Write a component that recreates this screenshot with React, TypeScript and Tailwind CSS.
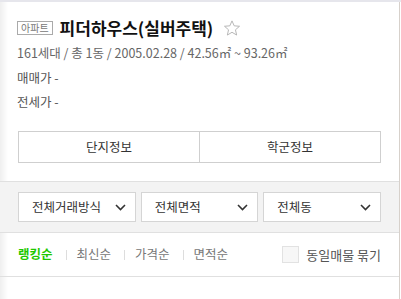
const sorts = ["랭킹순", "최신순", "가격순", "면적순"];
const filters = ["전체거래방식", "전체면적", "전체동"];

function Chevron() {
  return (
    <svg width="11" height="7" viewBox="0 0 11 7" className="shrink-0">
      <path d="M1 1l4.5 4.5L10 1" fill="none" stroke="#333" strokeWidth="1.6" />
    </svg>
  );
}

function Star() {
  return (
    <svg width="18" height="18" viewBox="0 0 24 24">
      <path
        d="M12 2.5l2.9 6.6 7.1.6-5.4 4.7 1.6 7-6.2-3.7-6.2 3.7 1.6-7L2 9.7l7.1-.6z"
        fill="none"
        stroke="#b5b5b5"
        strokeWidth="1.3"
        strokeLinejoin="round"
      />
    </svg>
  );
}

export default function App() {
  return (
    <div className="w-[401px] h-[299px] overflow-hidden bg-white font-['Noto_Sans_CJK_KR',sans-serif]">
      <div className="h-[2px] bg-[#e6e6ec]" />
      <div className="flex h-[297px]">
        <div className="w-[400px] border-r border-[#d7d1cb] bg-[linear-gradient(to_right,#efefef,#ffffff_8px)]">
          {/* header */}
          <div className="pl-[17px] pr-[17px] pt-[14px]">
            <div className="flex h-[24px] items-center">
              <span className="flex h-[14px] items-center border border-[#aaa] px-[3px] text-[10px] leading-none text-[#777]">
                아파트
              </span>
              <h1 className="ml-[7px] text-[17px] font-bold leading-[24px] text-[#111]">
                피더하우스(실버주택)
              </h1>
              <span className="ml-[10px] flex">
                <Star />
              </span>
            </div>
            <p className="mt-[4px] h-[18px] text-[12.5px] leading-[18px] text-[#666]">
              161세대 / 총 1동 / 2005.02.28 / 42.56㎡ ~ 93.26㎡
            </p>
            <p className="mt-[4px] h-[24px] text-[12.5px] leading-[24px] text-[#555]">매매가 -</p>
            <p className="h-[24px] text-[12.5px] leading-[24px] text-[#555]">전세가 -</p>
          </div>

          <div className="mx-[18px] mt-[17px] flex h-[32px] border border-[#cfcfcf] text-[12.5px] text-[#333]">
            <button className="flex flex-1 items-center justify-center">단지정보</button>
            <button className="flex flex-1 items-center justify-center border-l border-[#cfcfcf]">
              학군정보
            </button>
          </div>

          {/* filters */}
          <div className="mt-[18px] flex gap-[5px] border-y border-[#e0e0e0] bg-[#f3f3f3] px-[18px] py-[10px]">
            {filters.map((f) => (
              <div
                key={f}
                className="flex h-[30px] w-[118px] items-center justify-between border border-[#d5d5d5] bg-white pl-[13px] pr-[9px] text-[12.5px] text-[#333]"
              >
                <span>{f}</span>
                <Chevron />
              </div>
            ))}
          </div>

          {/* sort */}
          <div className="flex h-[44px] items-center border-b border-[#e0e0e0] px-[18px] text-[12.5px]">
            {sorts.map((s, i) => (
              <div key={s} className="flex items-center">
                {i > 0 && <span className="ml-[13px] mr-[10px] h-[10px] w-px bg-[#ddd]" />}
                <span className={i === 0 ? "font-bold text-[#1ec800]" : "text-[#777]"}>{s}</span>
              </div>
            ))}
            <label className="ml-auto flex items-center text-[#555]">
              <span className="h-[17px] w-[17px] border border-[#e2e2e2] bg-[#f7f7f7]" />
              <span className="ml-[7px] text-[13px]">동일매물 묶기</span>
            </label>
          </div>
        </div>
      </div>
    </div>
  );
}
